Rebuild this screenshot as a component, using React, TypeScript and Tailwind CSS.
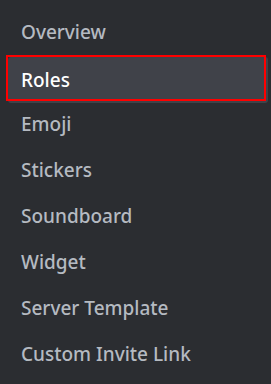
import React from 'react';

// 사이드바 메뉴 목록
const ITEMS = [
  'Overview',
  'Roles',
  'Emoji',
  'Stickers',
  'Soundboard',
  'Widget',
  'Server Template',
  'Custom Invite Link',
];

export default function App() {
  const active = 'Roles';

  return (
    <div
      className="w-[271px] h-[384px] bg-[#2b2d31] pt-[9px] pl-[8px] overflow-hidden"
      style={{ fontFamily: '"Noto Sans", "Open Sans", sans-serif' }}
    >
      <div className="flex flex-col w-[260px]">
        {ITEMS.map(item =>
          item === active ? (
            <div key={item} className="relative">
              <div className="h-[46px] flex items-center px-[13px] mt-[2px] -mb-[2px] bg-[#404249] rounded-[3px] text-white text-[19px] font-medium">
                {item}
              </div>
              {/* 강조 표시 */}
              <div className="absolute left-[-2px] top-0 w-[260px] h-[46px] border-2 border-[#ff0000]" />
            </div>
          ) : (
            <div
              key={item}
              className="h-[46px] flex items-center px-[13px] text-[#b5bac1] text-[19px] font-medium"
            >
              {item}
            </div>
          )
        )}
      </div>
    </div>
  );
}
